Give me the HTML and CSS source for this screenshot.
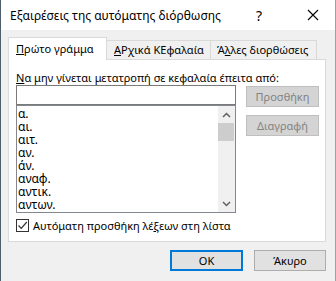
FILE: index.html
```html
<!DOCTYPE html>
<html lang="el">
<head>
  <meta charset="UTF-8" />
  <title>Εξαιρέσεις της αυτόματης διόρθωσης</title>
  <link rel="stylesheet" href="styles.css">
</head>
<body>
  <div class="dialog">
    <div class="titlebar">
      <span class="title">Εξαιρέσεις της αυτόματης διόρθωσης</span>
      <span class="help">?</span>
      <span class="close">
        <svg width="12" height="12" viewBox="0 0 12 12">
          <path d="M1 1 L11 11 M11 1 L1 11" stroke="#000" stroke-width="1.1" fill="none" />
        </svg>
      </span>
    </div>

    <div class="body">
      <div class="tabs">
        <div class="tab active"><u>Π</u>ρώτο γράμμα</div>
        <div class="tab tab-2"><u>Α</u>Ρχικά ΚΕφαλαία</div>
        <div class="tab tab-3">Ά<u>λ</u>λες διορθώσεις</div>
      </div>

      <div class="panel">
        <div class="label"><u>Ν</u>α μην γίνεται μετατροπή σε κεφαλαία έπειτα από:</div>
        <div class="row">
          <div class="left-col">
            <div class="input"></div>
            <div class="listbox">
              <div class="items">
                <div>α.</div>
                <div>αι.</div>
                <div>αιτ.</div>
                <div>αν.</div>
                <div>άν.</div>
                <div>αναφ.</div>
                <div>αντικ.</div>
                <div>αντων.</div>
              </div>
              <div class="scrollbar">
                <div class="arrow">
                  <svg width="9" height="6" viewBox="0 0 9 6">
                    <path d="M1 5 L4.5 1.5 L8 5" stroke="#606060" stroke-width="1.5" fill="none" />
                  </svg>
                </div>
                <div class="thumb"></div>
                <div class="track"></div>
                <div class="arrow">
                  <svg width="9" height="6" viewBox="0 0 9 6">
                    <path d="M1 1 L4.5 4.5 L8 1" stroke="#606060" stroke-width="1.5" fill="none" />
                  </svg>
                </div>
              </div>
            </div>
          </div>
          <div class="side-buttons">
            <button class="btn disabled">Προσθήκη</button>
            <button class="btn disabled">Διαγραφή</button>
          </div>
        </div>
        <div class="check">
          <span class="box">
            <svg width="11" height="11" viewBox="0 0 11 11">
              <path d="M1.5 5.5 L4.2 8.3 L9.8 2" stroke="#333" stroke-width="1.2" fill="none" />
            </svg>
          </span>
          <span>Αυτόματη προσθήκη λέ<u>ξ</u>εων στη λίστα</span>
        </div>
      </div>

      <div class="footer">
        <button class="btn ok">OK</button>
        <button class="btn">Άκυρο</button>
      </div>
    </div>
  </div>
</body>
</html>
```

FILE: styles.css
```css
body {
  margin: 0;
  font-family: "Noto Sans", "DejaVu Sans", sans-serif;
  font-size: 11px;
  color: #000;
  background: #f0f0f0;
}

.dialog {
  width: 336px;
  height: 281px;
  box-sizing: border-box;
  border-left: 1px solid #4e5d6c;
  border-right: 1px solid #a0a0a0;
  background: #f0f0f0;
  overflow: hidden;
}

.titlebar {
  height: 30px;
  background: #fff;
  display: flex;
  align-items: center;
  padding-left: 9px;
}

.title {
  flex: 1;
  font-size: 12px;
}

.help {
  width: 14px;
  font-size: 14px;
  margin-right: 37px;
}

.close {
  display: flex;
  margin-right: 16px;
}

.body {
  padding: 0 9px 0 7px;
}

.tabs {
  display: flex;
  align-items: flex-end;
  height: 22px;
  margin-top: 7px;
}

.tab {
  box-sizing: border-box;
  height: 19px;
  border: 1px solid #d9d9d9;
  border-bottom: none;
  background: #f0f0f0;
  padding-left: 7px;
  line-height: 17px;
  white-space: nowrap;
}

.tab.active {
  width: 99px;
  height: 23px;
  margin-bottom: -1px;
  background: #fff;
  position: relative;
  z-index: 1;
  line-height: 21px;
}

.tab-2 {
  width: 105px;
  margin-left: -1px;
}

.tab-3 {
  width: 107px;
  margin-left: -1px;
  padding-left: 6px;
}

.panel {
  box-sizing: border-box;
  width: 318px;
  height: 183px;
  border: 1px solid #d9d9d9;
  background: #fff;
  padding: 10px 0 0 7px;
}

.label {
  line-height: 15px;
  white-space: nowrap;
}

.row {
  display: flex;
}

.left-col {
  width: 220px;
}

.input {
  box-sizing: border-box;
  height: 20px;
  border: 1px solid #7a7a7a;
}

.listbox {
  box-sizing: border-box;
  height: 108px;
  border: 1px solid #828790;
  display: flex;
  overflow: hidden;
}

.items {
  flex: 1;
  padding: 1px 0 0 1px;
  font-size: 12px;
  line-height: 13px;
}

.scrollbar {
  width: 17px;
  background: #f0f0f0;
  display: flex;
  flex-direction: column;
}

.arrow {
  height: 17px;
  display: flex;
  align-items: center;
  justify-content: center;
}

.thumb {
  height: 18px;
  margin: 0 1px 0 0;
  background: #cdcdcd;
}

.track {
  flex: 1;
}

.side-buttons {
  display: flex;
  flex-direction: column;
  gap: 8px;
  margin: 1px 0 0 10px;
}

.btn {
  box-sizing: border-box;
  width: 73px;
  height: 21px;
  padding: 0;
  font-family: inherit;
  font-size: 11px;
  background: #e1e1e1;
  border: 1px solid #adadad;
  color: #000;
}

.btn.disabled {
  background: #d4d4d4;
  border-color: #bfbfbf;
  color: #838383;
}

.btn.ok {
  border: 2px solid #0078d7;
}

.check {
  display: flex;
  align-items: center;
  gap: 4px;
  margin-top: 5px;
  line-height: 15px;
}

.box {
  box-sizing: border-box;
  width: 13px;
  height: 13px;
  border: 1px solid #333;
  display: flex;
  align-items: center;
  justify-content: center;
}

.footer {
  display: flex;
  justify-content: flex-end;
  gap: 11px;
  margin-top: 8px;
}

.footer .btn:last-child {
  width: 72px;
}
```
